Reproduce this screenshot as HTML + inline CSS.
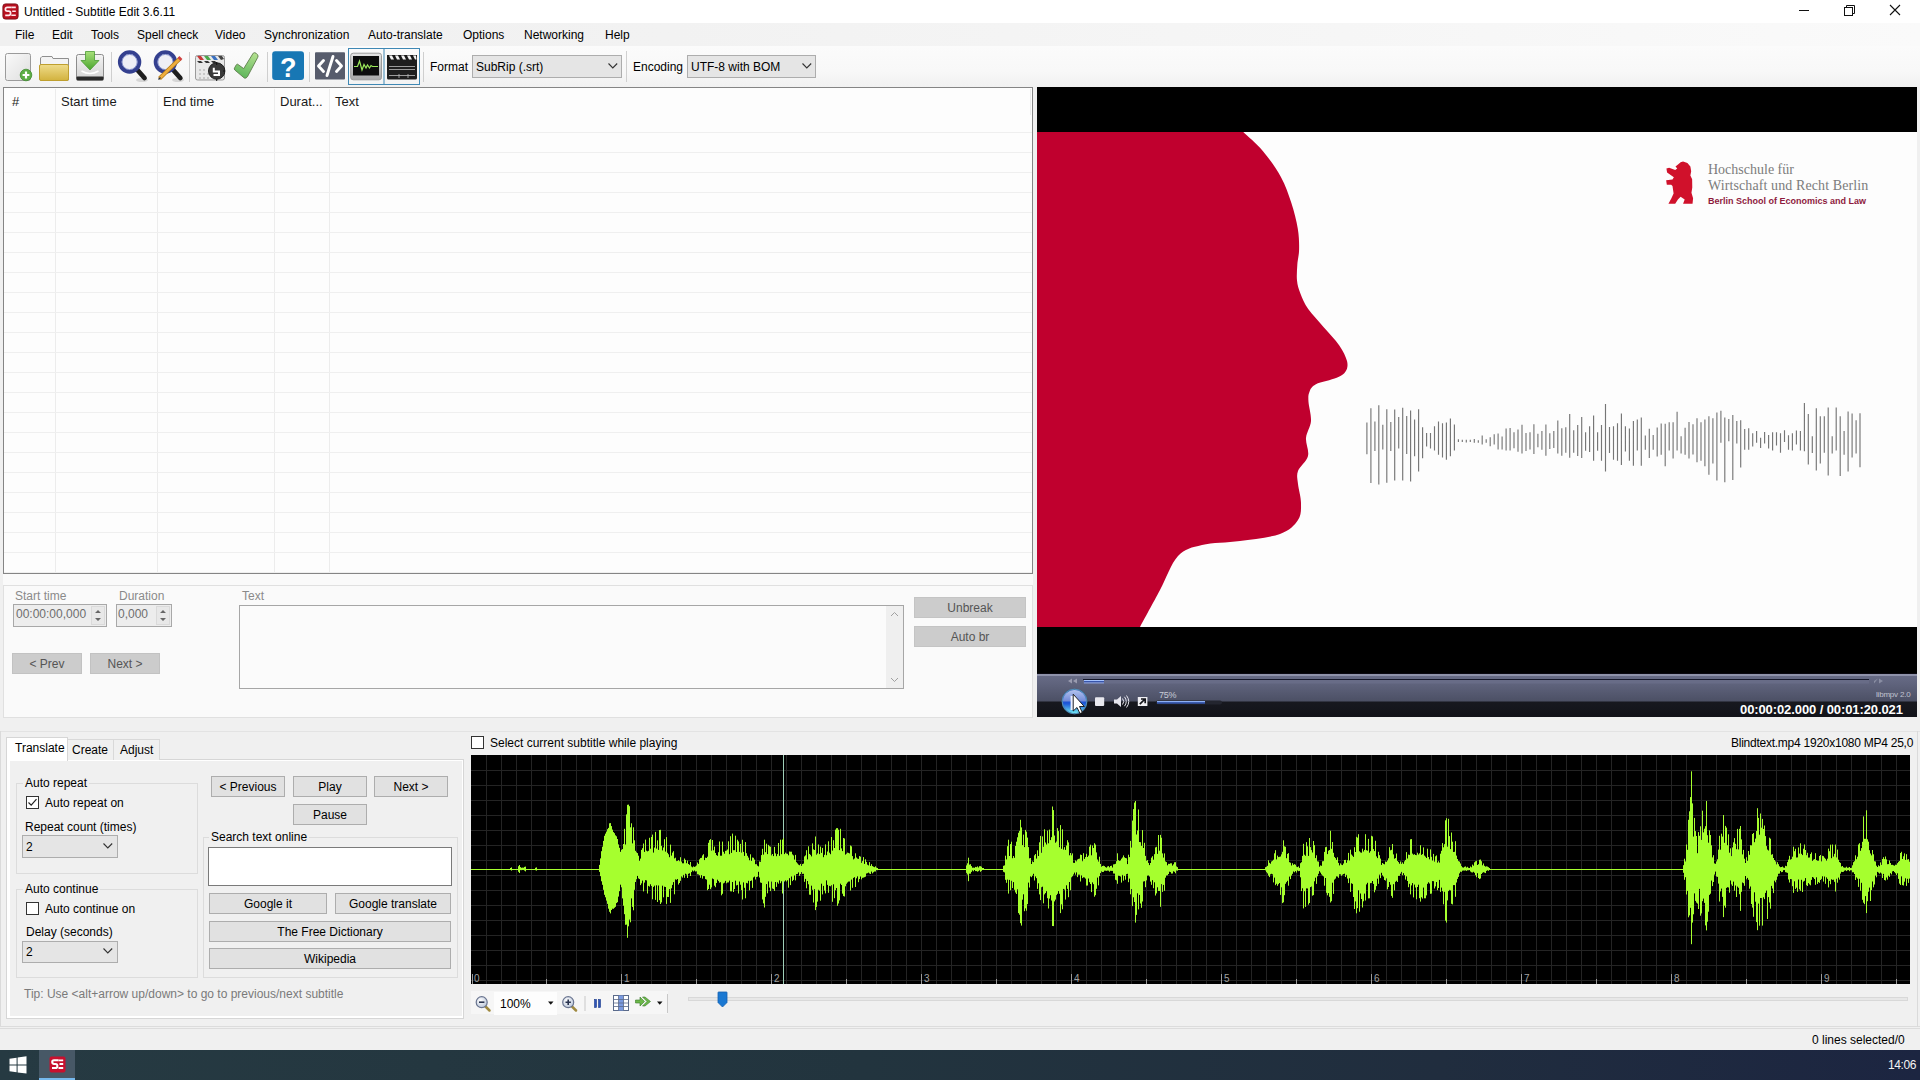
<!DOCTYPE html>
<html><head><meta charset="utf-8"><title>Subtitle Edit</title>
<style>
html,body{margin:0;padding:0;}
body{width:1920px;height:1080px;overflow:hidden;position:relative;background:#f0f0f0;font-family:"Liberation Sans", sans-serif;}
.a{position:absolute;}
.t{position:absolute;white-space:pre;font-family:"Liberation Sans", sans-serif;}
svg{overflow:visible}
</style></head><body>
<div class="a" style="left:0px;top:0px;width:1920px;height:23px;background:#ffffff"></div>
<svg class="a" style="left:1.5px;top:2.5px" width="17" height="17" viewBox="0 0 17 17">
<rect x="0.9" y="0.9" width="15.2" height="15.2" rx="2.6" fill="#b8101f" stroke="#7a0a14" stroke-width="0.9"/>
<path d="M9.3,4.4 H5.2 Q3.4,4.4 3.4,6.3 Q3.4,8.2 5.2,8.2 H6.8 Q8.6,8.2 8.6,10.2 Q8.6,12.3 6.6,12.3 H3.2" stroke="#ffe8ec" stroke-width="1.7" fill="none"/>
<path d="M9.3,4.4 H13.8 M10.2,8.2 H13.8 M9.3,12.3 H13.8" stroke="#ffe8ec" stroke-width="1.6"/>
</svg>
<div class="t" style="left:24px;top:6px;font-size:12px;line-height:12px;color:#000;">Untitled - Subtitle Edit 3.6.11</div>
<div class="a" style="left:1799px;top:10px;width:10px;height:1px;background:#111"></div>
<svg class="a" style="left:1843px;top:4px" width="13" height="13"><path d="M3.5,3.5 V1.5 H11.5 V9.5 H9.5" stroke="#111" fill="none" stroke-width="1"/><rect x="1.5" y="3.5" width="8" height="8" fill="none" stroke="#111"/></svg>
<svg class="a" style="left:1889px;top:4px" width="13" height="13"><path d="M1,1 L11,11 M11,1 L1,11" stroke="#111" stroke-width="1.1"/></svg>
<div class="a" style="left:0px;top:23px;width:1920px;height:23px;background:linear-gradient(90deg,#f0f0f0 0%,#f2f2f2 35%,#f6f6f6 70%,#fafafa 100%)"></div>
<div class="t" style="left:15px;top:29px;font-size:12px;line-height:12px;color:#000;">File</div>
<div class="t" style="left:52px;top:29px;font-size:12px;line-height:12px;color:#000;">Edit</div>
<div class="t" style="left:91px;top:29px;font-size:12px;line-height:12px;color:#000;">Tools</div>
<div class="t" style="left:137px;top:29px;font-size:12px;line-height:12px;color:#000;">Spell check</div>
<div class="t" style="left:215px;top:29px;font-size:12px;line-height:12px;color:#000;">Video</div>
<div class="t" style="left:264px;top:29px;font-size:12px;line-height:12px;color:#000;">Synchronization</div>
<div class="t" style="left:368px;top:29px;font-size:12px;line-height:12px;color:#000;">Auto-translate</div>
<div class="t" style="left:463px;top:29px;font-size:12px;line-height:12px;color:#000;">Options</div>
<div class="t" style="left:524px;top:29px;font-size:12px;line-height:12px;color:#000;">Networking</div>
<div class="t" style="left:605px;top:29px;font-size:12px;line-height:12px;color:#000;">Help</div>
<div class="a" style="left:0px;top:46px;width:1920px;height:41px;background:linear-gradient(180deg,#fbfbfb 0%,#f8f8f8 60%,#f1f1f1 100%)"></div>
<svg class="a" style="left:0;top:44px" width="430" height="44" viewBox="0 44 430 44">
<defs>
<linearGradient id="gpage" x1="0" y1="0" x2="1" y2="1"><stop offset="0" stop-color="#fafafa"/><stop offset="1" stop-color="#dedede"/></linearGradient>
<linearGradient id="gfold" x1="0" y1="0" x2="0" y2="1"><stop offset="0" stop-color="#efdc8a"/><stop offset="1" stop-color="#d2b23e"/></linearGradient>
<linearGradient id="gsave" x1="0" y1="0" x2="0" y2="1"><stop offset="0" stop-color="#f4f4f4"/><stop offset="1" stop-color="#d2d2d2"/></linearGradient>
<linearGradient id="garrow" x1="0" y1="0" x2="0" y2="1"><stop offset="0" stop-color="#a8e07a"/><stop offset="1" stop-color="#4aa52e"/></linearGradient>
<linearGradient id="gcheck" x1="0.7" y1="0" x2="0.4" y2="1"><stop offset="0" stop-color="#b2e08e"/><stop offset="1" stop-color="#5cb55a"/></linearGradient>
<linearGradient id="gmon" x1="0" y1="0" x2="0" y2="1"><stop offset="0" stop-color="#e6e6e6"/><stop offset="1" stop-color="#a8a8a8"/></linearGradient>
</defs>
<!-- new -->
<rect x="5.5" y="53.5" width="25" height="27" rx="2" fill="url(#gpage)" stroke="#9b9b9b"/>
<circle cx="26" cy="75" r="5.8" fill="#5cae45" stroke="#3f8a30" stroke-width="0.8"/>
<path d="M26,71.6 V78.4 M22.6,75 H29.4" stroke="#fff" stroke-width="2.2"/>
<!-- folder -->
<path d="M40.5,58 V80 H68.5 V58.5 H53 L52,56.5 H42 Z" fill="#f3f3f3" stroke="#8f8f8f"/>
<rect x="39.5" y="64.5" width="29" height="16" rx="1.5" fill="url(#gfold)" stroke="#bf9f2e"/>
<!-- save -->
<rect x="76.5" y="54.5" width="27" height="25.5" rx="2" fill="url(#gsave)" stroke="#8c8c8c"/>
<rect x="76.5" y="76.5" width="27" height="4" rx="1" fill="#2a2a2a"/>
<path d="M81.5,71 Q90,76 98.5,71" stroke="#fff" stroke-width="1.5" fill="none"/>
<path d="M85.5,51.5 H94.5 V60.5 H99 L90,70 L81,60.5 H85.5 Z" fill="url(#garrow)" stroke="#4a9a33" stroke-width="0.8"/>
<rect x="111" y="52" width="1" height="30" fill="#cfcfcf"/>
<!-- find -->
<ellipse cx="142" cy="80" rx="6" ry="2" fill="#000" opacity="0.12"/>
<path d="M137,69.5 L144.5,78" stroke="#1e1e1e" stroke-width="4.8" stroke-linecap="round"/>
<circle cx="129.6" cy="62" r="9.8" fill="#eeeff6" stroke="#34408f" stroke-width="3.8"/>
<circle cx="129.6" cy="62" r="7.6" fill="none" stroke="#6a78c0" stroke-width="0.8"/>
<!-- replace -->
<ellipse cx="178" cy="80" rx="6" ry="2" fill="#000" opacity="0.12"/>
<path d="M172.8,69.5 L180.3,78" stroke="#1e1e1e" stroke-width="4.8" stroke-linecap="round"/>
<circle cx="165.4" cy="62" r="9.8" fill="#eeeff6" stroke="#34408f" stroke-width="3.8"/>
<circle cx="165.4" cy="62" r="7.6" fill="none" stroke="#6a78c0" stroke-width="0.8"/>
<path d="M159.5,78.5 L180,58.5" stroke="#b07818" stroke-width="4"/><path d="M159.5,78.5 L180,58.5" stroke="#eeae3e" stroke-width="2.6"/>
<path d="M178.5,57 L181.5,60" stroke="#d04040" stroke-width="2.5"/>
<path d="M158.5,79.5 L160.5,77.5" stroke="#333" stroke-width="1.5"/>
<rect x="189" y="52" width="1" height="30" fill="#cfcfcf"/>
<!-- visual sync clapper -->
<rect x="195.5" y="55.5" width="29" height="24.5" rx="2" fill="#e8e8e8" stroke="#9a9a9a"/>
<path d="M197,56 L201,56 L204,60 L200,60 Z" fill="#c83838"/><path d="M204,56 L208,56 L211,60 L207,60 Z" fill="#4aa84a"/><path d="M211,56 L215,56 L218,60 L214,60 Z" fill="#3a70c0"/><path d="M218,56 L222,56 L224,59 L221,60 Z" fill="#444"/>
<path d="M197,61 L201,61 L203,63 L199,63 Z M204,61 L208,61 L210,63 L206,63 Z M211,61 L215,61 L217,63 L213,63 Z" fill="#333"/>
<path d="M199,70 h2 M203,70 h2 M199,74 h2 M203,74 h2 M207,74 h2 M199,78 h2 M203,78 h2 M207,78 h2" stroke="#c8c8c8" stroke-width="2"/>
<circle cx="216.7" cy="71" r="8.2" fill="#3a3a3a" stroke="#1e1e1e"/>
<path d="M213.8,67.8 V71.5 H219 V75 H213.5" stroke="#fff" stroke-width="2" fill="none"/>
<path d="M216.7,62 V65 M216.7,79 V81 M225,71 h-2" stroke="#111" stroke-width="1"/>
<!-- check -->
<path d="M237.6,64.2 L243.7,68.6 L253.2,53.2 Q254.5,52.2 256,53.2 L257.6,54.8 Q258.4,56 257.8,57.2 L247.4,76.8 Q246,78.8 244.3,78 L234.8,70 Q233.8,69 234.6,67.8 L236.2,65 Q236.8,64 237.6,64.2 Z" fill="url(#gcheck)" stroke="#5f7d4c" stroke-width="0.9" stroke-linejoin="round"/>
<rect x="267" y="52" width="1" height="30" fill="#cfcfcf"/>
<!-- help -->
<rect x="272.2" y="51.3" width="31.8" height="28.8" rx="3" fill="#1877b4"/>
<text x="288.3" y="76.5" text-anchor="middle" font-family="Liberation Sans" font-weight="bold" font-size="27" fill="#fff">?</text>
<rect x="309" y="52" width="1" height="30" fill="#cfcfcf"/>
<!-- source view -->
<rect x="315" y="52.2" width="30" height="27.4" rx="1" fill="#575c6c"/>
<path d="M323.5,60.5 L318.5,66 L323.5,71.5 M336.5,60.5 L341.5,66 L336.5,71.5 M333,56.5 L327,75.5" stroke="#fff" stroke-width="2.9" fill="none" stroke-linecap="round" stroke-linejoin="round"/>
<!-- selected boxes -->
<rect x="348.5" y="48.5" width="71" height="36" fill="none" stroke="#3f88b4"/>
<rect x="383.5" y="48.5" width="1" height="36" fill="#3f88b4"/>
<!-- waveform icon -->
<rect x="350.7" y="53.2" width="30.8" height="26.6" rx="2.5" fill="url(#gmon)" stroke="#9c9c9c"/>
<rect x="353" y="56" width="26" height="19.5" fill="#0d0d0d"/>
<path d="M354,66.5 H357.5 L359.5,61 L362,70 L364,64.5 L366,68 L367.5,65 L369.5,68 L371,65.5 L372.5,66.5 H378" stroke="#9be85a" stroke-width="1.2" fill="none"/>
<!-- video clapper -->
<rect x="387" y="58.5" width="30" height="21" rx="1.5" fill="#1e1e1e"/>
<rect x="387" y="55" width="30" height="5" fill="#181818"/>
<path d="M389,55.5 L392,55.5 L394,59.5 L391,59.5 Z M395,55.5 L398,55.5 L400,59.5 L397,59.5 Z M401,55.5 L404,55.5 L406,59.5 L403,59.5 Z M407,55.5 L410,55.5 L412,59.5 L409,59.5 Z M413,55.5 L416,55.5 L416.5,59.5 L415,59.5 Z" fill="#f2f2f2"/>
<path d="M389,66.5 H415 M389,69.5 H415 M389,75.5 H415 M399,74 V78 M408,74 V78" stroke="#bbb" stroke-width="0.8"/>
<rect x="423" y="52" width="1" height="30" fill="#cfcfcf"/>
</svg>

<div class="t" style="left:430px;top:61px;font-size:12px;line-height:12px;color:#000;">Format</div>
<div class="a" style="left:472px;top:55px;width:150px;height:23px;background:#e5e5e5;border:1px solid #adadad;box-sizing:border-box"></div>
<div class="t" style="left:476px;top:61px;font-size:12px;line-height:12px;color:#000;">SubRip (.srt)</div>
<svg class="a" style="left:608px;top:63px" width="10" height="7"><path d="M0.5,0.5 L4.8,5 L9.2,0.5" stroke="#333" fill="none" stroke-width="1.1"/></svg>
<div class="a" style="left:626px;top:51px;width:1px;height:31px;background:#d0d0d0"></div>
<div class="t" style="left:633px;top:61px;font-size:12px;line-height:12px;color:#000;">Encoding</div>
<div class="a" style="left:687px;top:55px;width:129px;height:23px;background:#e5e5e5;border:1px solid #adadad;box-sizing:border-box"></div>
<div class="t" style="left:691px;top:61px;font-size:12px;line-height:12px;color:#000;">UTF-8 with BOM</div>
<svg class="a" style="left:802px;top:63px" width="10" height="7"><path d="M0.5,0.5 L4.8,5 L9.2,0.5" stroke="#333" fill="none" stroke-width="1.1"/></svg>
<div class="a" style="left:0px;top:87px;width:1920px;height:963px;background:#f0f0f0"></div>
<div class="a" style="left:3px;top:573px;width:1030px;height:12px;background:#fafafa"></div>
<div class="a" style="left:3px;top:87px;width:1030px;height:487px;background:#fdfdfd;border:1px solid #858585;box-sizing:border-box"></div>
<svg class="a" style="left:0;top:0" width="1040" height="580"><rect x="55" y="89" width="1" height="483" fill="#ececec"/><rect x="157" y="89" width="1" height="483" fill="#ececec"/><rect x="274" y="89" width="1" height="483" fill="#ececec"/><rect x="329" y="89" width="1" height="483" fill="#ececec"/><rect x="1030" y="89" width="1" height="26" fill="#ececec"/><rect x="4" y="132" width="1028" height="1" fill="#efefef"/><rect x="4" y="152" width="1028" height="1" fill="#efefef"/><rect x="4" y="172" width="1028" height="1" fill="#efefef"/><rect x="4" y="192" width="1028" height="1" fill="#efefef"/><rect x="4" y="212" width="1028" height="1" fill="#efefef"/><rect x="4" y="232" width="1028" height="1" fill="#efefef"/><rect x="4" y="252" width="1028" height="1" fill="#efefef"/><rect x="4" y="272" width="1028" height="1" fill="#efefef"/><rect x="4" y="292" width="1028" height="1" fill="#efefef"/><rect x="4" y="312" width="1028" height="1" fill="#efefef"/><rect x="4" y="332" width="1028" height="1" fill="#efefef"/><rect x="4" y="352" width="1028" height="1" fill="#efefef"/><rect x="4" y="372" width="1028" height="1" fill="#efefef"/><rect x="4" y="392" width="1028" height="1" fill="#efefef"/><rect x="4" y="412" width="1028" height="1" fill="#efefef"/><rect x="4" y="432" width="1028" height="1" fill="#efefef"/><rect x="4" y="452" width="1028" height="1" fill="#efefef"/><rect x="4" y="472" width="1028" height="1" fill="#efefef"/><rect x="4" y="492" width="1028" height="1" fill="#efefef"/><rect x="4" y="512" width="1028" height="1" fill="#efefef"/><rect x="4" y="532" width="1028" height="1" fill="#efefef"/><rect x="4" y="552" width="1028" height="1" fill="#efefef"/><rect x="4" y="572" width="1028" height="1" fill="#efefef"/></svg>
<div class="t" style="left:12px;top:95px;font-size:13px;line-height:13px;color:#1a1a1a;">#</div>
<div class="t" style="left:61px;top:95px;font-size:13px;line-height:13px;color:#1a1a1a;">Start time</div>
<div class="t" style="left:163px;top:95px;font-size:13px;line-height:13px;color:#1a1a1a;">End time</div>
<div class="t" style="left:280px;top:95px;font-size:13px;line-height:13px;color:#1a1a1a;">Durat...</div>
<div class="t" style="left:335px;top:95px;font-size:13px;line-height:13px;color:#1a1a1a;">Text</div>
<div class="a" style="left:3px;top:585px;width:1030px;height:133px;background:#fafafa;border:1px solid #e0e0e0;box-sizing:border-box"></div>
<div class="t" style="left:15px;top:590px;font-size:12px;line-height:12px;color:#8a8a8a;">Start time</div>
<div class="t" style="left:119px;top:590px;font-size:12px;line-height:12px;color:#8a8a8a;">Duration</div>
<div class="t" style="left:242px;top:590px;font-size:12px;line-height:12px;color:#8a8a8a;">Text</div>
<div class="a" style="left:13px;top:604px;width:94px;height:23px;background:#ededed;border:1px solid #a8a8a8;box-sizing:border-box"></div>
<div class="t" style="left:16px;top:608px;font-size:12px;line-height:12px;color:#6d6d6d;">00:00:00,000</div>
<div class="a" style="left:91px;top:606px;width:14px;height:19px;background:#e8e8e8;border:1px solid #dadada;box-sizing:border-box"></div>
<svg class="a" style="left:91px;top:606px" width="14" height="19"><path d="M4,7 L7,4 L10,7 Z M4,12 L7,15 L10,12 Z" fill="#666"/></svg>
<div class="a" style="left:116px;top:604px;width:56px;height:23px;background:#ededed;border:1px solid #a8a8a8;box-sizing:border-box"></div>
<div class="t" style="left:118px;top:608px;font-size:12px;line-height:12px;color:#6d6d6d;">0,000</div>
<div class="a" style="left:156px;top:606px;width:14px;height:19px;background:#e8e8e8;border:1px solid #dadada;box-sizing:border-box"></div>
<svg class="a" style="left:156px;top:606px" width="14" height="19"><path d="M4,7 L7,4 L10,7 Z M4,12 L7,15 L10,12 Z" fill="#666"/></svg>
<div class="a" style="left:12px;top:653px;width:70px;height:21px;background:#cccccc;border:1px solid #c2c2c2;box-sizing:border-box"></div>
<div class="t" style="left:12px;width:70px;text-align:center;top:658px;font-size:12px;line-height:12px;color:#555;">&lt; Prev</div>
<div class="a" style="left:90px;top:653px;width:70px;height:21px;background:#cccccc;border:1px solid #c2c2c2;box-sizing:border-box"></div>
<div class="t" style="left:90px;width:70px;text-align:center;top:658px;font-size:12px;line-height:12px;color:#555;">Next &gt;</div>
<div class="a" style="left:239px;top:605px;width:665px;height:84px;background:#fbfbfb;border:1px solid #a6a6a6;box-sizing:border-box"></div>
<div class="a" style="left:886px;top:606px;width:17px;height:82px;background:#efefef"></div>
<svg class="a" style="left:886px;top:606px" width="17" height="82"><path d="M5,10 L8.5,6.5 L12,10 M5,72 L8.5,75.5 L12,72" stroke="#a0a0a0" fill="none" stroke-width="1"/></svg>
<div class="a" style="left:914px;top:597px;width:112px;height:21px;background:#cccccc;border:1px solid #c4c4c4;box-sizing:border-box"></div>
<div class="t" style="left:914px;width:112px;text-align:center;top:602px;font-size:12px;line-height:12px;color:#555;">Unbreak</div>
<div class="a" style="left:914px;top:626px;width:112px;height:21px;background:#cccccc;border:1px solid #c4c4c4;box-sizing:border-box"></div>
<div class="t" style="left:914px;width:112px;text-align:center;top:631px;font-size:12px;line-height:12px;color:#555;">Auto br</div>
<div class="a" style="left:1037px;top:87px;width:880px;height:630px;background:#000"></div>
<div class="a" style="left:1037px;top:132px;width:880px;height:495px;background:#fdfdfd"></div>
<svg class="a" style="left:0;top:0" width="1920" height="720"><path d="M1037,132 L1243.3,132  C1246.5,135.2 1256.5,143.4 1262.8,150.9 C1269.1,158.4 1276.2,168.2 1280.9,176.9 C1285.7,185.6 1288.5,194.2 1291.3,202.8 C1294.1,211.4 1296.5,220.9 1297.8,228.7 C1299.1,236.5 1299.2,243.3 1299.1,249.4 C1299.0,255.5 1297.6,259.8 1297.3,265.0 C1297.0,270.2 1296.5,275.9 1297.0,280.6 C1297.5,285.4 1298.5,288.8 1300.4,293.5 C1302.3,298.2 1304.3,303.5 1308.2,309.1 C1312.1,314.7 1318.5,321.1 1323.7,327.2 C1328.9,333.2 1335.4,339.8 1339.3,345.4 C1343.2,351.0 1345.9,356.7 1347.0,361.0 C1348.1,365.3 1347.4,368.5 1345.7,371.3 C1344.0,374.1 1341.7,375.6 1336.7,377.8 C1331.7,380.0 1320.5,381.9 1315.9,384.3 C1311.4,386.7 1310.6,389.1 1309.4,392.0 C1308.2,394.9 1308.2,397.2 1308.5,402.0 C1308.8,406.8 1311.4,415.0 1311.0,421.0 C1310.6,427.0 1306.5,432.2 1306.0,438.0 C1305.5,443.8 1309.3,450.5 1308.0,456.0 C1306.7,461.5 1299.7,466.3 1298.0,471.0 C1296.3,475.7 1297.5,478.7 1298.0,484.0 C1298.5,489.3 1301.0,497.0 1301.0,503.0 C1301.0,509.0 1301.5,514.8 1298.0,520.0 C1294.5,525.2 1289.7,530.5 1280.0,534.0 C1270.3,537.5 1253.0,539.2 1240.0,541.0 C1227.0,542.8 1212.3,542.5 1202.0,545.0 C1191.7,547.5 1185.0,548.5 1178.0,556.0 C1171.0,563.5 1166.3,578.2 1160.0,590.0 C1153.7,601.8 1143.3,620.8 1140.0,627.0 L1037,627 Z" fill="#c0002e"/></svg>
<svg class="a" style="left:0;top:0" width="1920" height="720"><path d="M1366.9,422.5V454.3M1370.9,408.3V483.1M1374.9,421.4V451.0M1378.8,405.2V484.5M1382.8,424.7V449.5M1386.8,409.2V482.7M1390.8,422.0V451.0M1394.7,409.4V480.5M1398.7,417.1V448.6M1402.7,407.7V480.5M1406.7,416.1V453.9M1410.6,410.5V481.4M1414.6,419.6V456.3M1418.6,409.2V471.6M1422.6,427.3V458.3M1426.6,432.9V446.4M1430.5,432.9V448.6M1434.5,426.2V450.6M1438.5,421.4V454.8M1442.5,423.3V457.4M1446.4,422.5V459.7M1450.4,418.5V456.3M1454.4,424.4V450.4M1458.4,439.3V441.9M1462.3,439.7V441.9M1466.3,439.7V442.4M1470.3,439.7V441.9M1474.3,439.0V442.7M1478.3,440.2V442.8M1482.2,435.6V444.6M1486.2,439.3V442.8M1490.2,437.3V446.2M1494.2,434.2V444.4M1498.1,433.4V449.5M1502.1,436.4V449.5M1506.1,428.5V450.4M1510.1,428.0V450.6M1514.0,432.2V448.3M1518.0,429.5V451.7M1522.0,424.7V453.5M1526.0,433.1V451.0M1530.0,432.2V449.5M1533.9,424.2V453.9M1537.9,433.8V447.3M1541.9,431.1V449.7M1545.9,424.5V455.7M1549.8,433.3V448.9M1553.8,431.1V448.0M1557.8,420.4V453.6M1561.8,428.2V455.7M1565.8,427.3V452.8M1569.7,414.0V457.7M1573.7,430.3V452.8M1577.7,424.9V455.9M1581.7,417.1V458.1M1585.6,432.2V450.8M1589.6,426.2V452.1M1593.6,415.4V460.7M1597.6,432.2V450.8M1601.5,424.9V460.7M1605.5,403.9V471.6M1609.5,426.9V453.0M1613.5,426.2V459.7M1617.5,423.2V460.7M1621.4,413.4V465.0M1625.4,426.2V451.5M1629.4,428.4V460.7M1633.4,420.9V465.7M1637.3,419.4V450.6M1641.3,417.6V465.7M1645.3,435.6V449.7M1649.3,428.7V457.9M1653.2,435.1V449.7M1657.2,427.6V456.6M1661.2,423.5V454.8M1665.2,423.8V466.3M1669.2,422.3V450.6M1673.1,422.3V458.6M1677.1,411.8V450.6M1681.1,436.2V453.6M1685.1,427.8V454.8M1689.0,422.0V458.6M1693.0,424.2V454.5M1697.0,418.2V462.3M1701.0,422.3V460.7M1704.9,419.4V466.3M1708.9,416.3V474.7M1712.9,418.2V463.6M1716.9,412.5V480.5M1720.9,410.8V442.8M1724.8,417.6V482.2M1728.8,419.1V441.2M1732.8,414.9V480.0M1736.8,421.1V443.5M1740.7,420.2V467.5M1744.7,429.1V449.7M1748.7,428.2V449.7M1752.7,433.3V446.6M1756.6,431.1V442.8M1760.6,437.7V448.0M1764.6,432.0V443.5M1768.6,435.0V448.6M1772.6,432.2V450.6M1776.5,432.2V445.5M1780.5,433.3V452.8M1784.5,430.3V442.1M1788.5,435.3V449.7M1792.4,433.3V450.4M1796.4,430.4V444.4M1800.4,431.1V450.6M1804.4,403.1V451.2M1808.3,414.0V464.5M1812.3,436.2V453.0M1816.3,408.3V470.5M1820.3,416.3V463.4M1824.3,416.3V452.8M1828.2,407.6V475.4M1832.2,436.2V453.5M1836.2,407.6V450.6M1840.2,416.3V476.0M1844.1,431.1V454.8M1848.1,411.4V471.6M1852.1,413.4V457.4M1856.1,420.2V453.6M1860.0,413.2V467.2" stroke="#767676" stroke-width="1.15" fill="none"/></svg>
<svg class="a" style="left:1640px;top:140px" width="60" height="70" viewBox="0 0 443 517">
<path d="M318,158 L350,170 L372,195 L378,230 L372,262 L385,290 L386,350 L380,390 L392,430 L388,470 L318,470 L330,440 L300,420 L280,440 L260,470 L210,470 L232,430 L248,395 L240,340 L230,330 L198,330 L193,298 L240,292 L250,275 L200,240 L195,210 L215,205 L260,222 L275,210 L262,195 L285,178 L300,165 Z" fill="#d0112b"/>
</svg>
<div class="t" style="left:1708px;top:163px;font-family:'Liberation Serif',serif;font-size:14px;line-height:14px;color:#7c7c7c">Hochschule für</div>
<div class="t" style="left:1708px;top:179px;font-family:'Liberation Serif',serif;font-size:14px;line-height:14px;color:#7c7c7c;letter-spacing:0.1px">Wirtschaft und Recht Berlin</div>
<div class="t" style="left:1708px;top:197px;font-size:9px;line-height:9px;font-weight:bold;color:#8e1a3e">Berlin School of Economics and Law</div>

<div class="a" style="left:1037px;top:673px;width:880px;height:44px;background:linear-gradient(180deg,#0a0810 0px,#0a0810 1px,#8f92aa 1px,#8f92aa 2.5px,#676b86 3px,#5e627b 12px,#4c5065 28px,#17181f 29px,#121319 44px)"></div>
<svg class="a" style="left:1037px;top:673px" width="880" height="44" viewBox="1037 673 880 44">
<defs>
<linearGradient id="gplayT" x1="0" y1="0" x2="0" y2="1"><stop offset="0" stop-color="#b4c4ee"/><stop offset="1" stop-color="#6f88d8"/></linearGradient>
<linearGradient id="gplayB" x1="0" y1="0" x2="0" y2="1"><stop offset="0" stop-color="#1230c0"/><stop offset="0.6" stop-color="#1f5ad8"/><stop offset="1" stop-color="#6ee8f4"/></linearGradient>
</defs>
<rect x="1083" y="679" width="786" height="1" fill="#15172a"/>
<rect x="1083" y="680" width="786" height="3.5" fill="#686c87"/>
<rect x="1084" y="680" width="20" height="1.2" fill="#a4c2ff"/>
<rect x="1084" y="681.2" width="20" height="1.2" fill="#2a4cb0"/>
<rect x="1084" y="682.4" width="20" height="1" fill="#8ea8ea"/>
<path d="M1068,681 L1072,678.5 V683.5 Z M1073,681 L1077,678.5 V683.5 Z" fill="#9a9cb0"/>
<path d="M1874,681 L1878,678.5 L1874,683.5 Z M1879,678.5 L1883,681 L1879,683.5 Z" fill="#8a8ea3"/>
<circle cx="1074.5" cy="701.5" r="12.8" fill="#2a6a98"/>
<circle cx="1074.5" cy="701.5" r="11.6" fill="url(#gplayB)"/>
<path d="M1062.9,701.5 A11.6,11.6 0 0 1 1086.1,701.5 Z" fill="url(#gplayT)"/>
<circle cx="1074.5" cy="701.5" r="12.3" fill="none" stroke="#7ab0d8" stroke-width="0.8" opacity="0.7"/>
<rect x="1070.6" y="696" width="2.8" height="14" fill="#e8eeff"/>
<path d="M1073.2,694.2 L1073.2,711 L1077,707.5 L1080,713.5 L1082.3,712.5 L1079.5,706.5 L1084.3,706.5 Z" fill="#fff" stroke="#111" stroke-width="0.9" stroke-linejoin="round"/>
<rect x="1095" y="697.2" width="9.2" height="8.8" rx="1" fill="#e8e8ee"/>
<path d="M1114,699.5 H1117 L1121,696 V707 L1117,703.5 H1114 Z" fill="#e6e6ee"/>
<path d="M1122.5,698.5 Q1125,701.5 1122.5,704.5 M1124.5,696.8 Q1128,701.5 1124.5,706.2 M1126.5,695.5 Q1131,701.5 1126.5,707.5" stroke="#e6e6ee" stroke-width="1" fill="none"/>
<rect x="1137.8" y="697" width="9.6" height="9" fill="#f0f0f4"/>
<path d="M1139.8,704.2 L1145,699 M1141,699 H1145.2 V703.2" stroke="#15161c" stroke-width="1.7" fill="none"/>
<rect x="1156" y="700.5" width="66" height="4" rx="2" fill="#23252f"/>
<rect x="1157" y="701" width="48" height="1.3" fill="#8eb0f4"/>
<rect x="1157" y="702.3" width="48" height="1.3" fill="#3a64d0"/>
</svg>
<div class="t" style="left:1159px;top:691px;font-size:9px;line-height:9px;color:#c9ccd8;letter-spacing:-0.3px">75%</div>
<div class="t" style="left:1876px;top:691px;font-size:8px;line-height:8px;color:#c0c3d0;letter-spacing:-0.2px">libmpv 2.0</div>
<div class="t" style="left:1740px;top:703px;font-size:13px;line-height:13px;font-weight:bold;color:#fff;letter-spacing:-0.1px">00:00:02.000 / 00:01:20.021</div>

<div class="a" style="left:0px;top:731px;width:1920px;height:1px;background:#e3e3e3"></div>
<!-- outer panel border -->
<div class="a" style="left:0;top:731px;width:1px;height:296px;background:#dadada"></div>
<div class="a" style="left:0;top:1026px;width:1920px;height:1px;background:#dcdcdc"></div>
<div class="a" style="left:1917px;top:731px;width:1px;height:296px;background:#dadada"></div>
<!-- tab page -->
<div class="a" style="left:6px;top:759px;width:458px;height:260px;background:#fff;border:1px solid #d6d6d6;box-sizing:border-box"></div>
<div class="a" style="left:10px;top:761px;width:452px;height:255px;background:#f0f0f0"></div>
<!-- tabs -->
<div class="a" style="left:67px;top:739px;width:47px;height:21px;background:#f0f0f0;border:1px solid #d9d9d9;border-bottom:none;box-sizing:border-box"></div>
<div class="a" style="left:113px;top:739px;width:47px;height:21px;background:#f0f0f0;border:1px solid #d9d9d9;border-bottom:none;box-sizing:border-box"></div>
<div class="a" style="left:6px;top:737px;width:62px;height:24px;background:#fff;border:1px solid #d6d6d6;border-bottom:none;box-sizing:border-box"></div>
<div class="t" style="left:15px;top:742px;font-size:12px;line-height:12px">Translate</div>
<div class="t" style="left:72px;top:744px;font-size:12px;line-height:12px">Create</div>
<div class="t" style="left:120px;top:744px;font-size:12px;line-height:12px">Adjust</div>
<!-- groupbox auto repeat -->
<div class="a" style="left:16px;top:783px;width:182px;height:91px;border:1px solid #dcdcdc;box-sizing:border-box"></div>
<div class="t" style="left:23px;top:777px;font-size:12px;line-height:12px;background:#f0f0f0;padding:0 2px">Auto repeat</div>
<div class="a" style="left:26px;top:796px;width:13px;height:13px;background:#fff;border:1px solid #333;box-sizing:border-box"></div>
<svg class="a" style="left:26px;top:796px" width="13" height="13"><path d="M2.5,6.5 L5.2,9.2 L10.5,3.2" stroke="#222" stroke-width="1.2" fill="none"/></svg>
<div class="t" style="left:45px;top:797px;font-size:12px;line-height:12px">Auto repeat on</div>
<div class="t" style="left:25px;top:821px;font-size:12px;line-height:12px">Repeat count (times)</div>
<div class="a" style="left:22px;top:835px;width:96px;height:23px;background:#e5e5e5;border:1px solid #adadad;box-sizing:border-box"></div>
<div class="t" style="left:26px;top:841px;font-size:12px;line-height:12px">2</div>
<svg class="a" style="left:103px;top:843px" width="10" height="7"><path d="M0.5,0.5 L4.8,5 L9.2,0.5" stroke="#333" fill="none" stroke-width="1.1"/></svg>
<!-- groupbox auto continue -->
<div class="a" style="left:16px;top:889px;width:182px;height:89px;border:1px solid #dcdcdc;box-sizing:border-box"></div>
<div class="t" style="left:23px;top:883px;font-size:12px;line-height:12px;background:#f0f0f0;padding:0 2px">Auto continue</div>
<div class="a" style="left:26px;top:902px;width:13px;height:13px;background:#fff;border:1px solid #333;box-sizing:border-box"></div>
<div class="t" style="left:45px;top:903px;font-size:12px;line-height:12px">Auto continue on</div>
<div class="t" style="left:26px;top:926px;font-size:12px;line-height:12px">Delay (seconds)</div>
<div class="a" style="left:22px;top:941px;width:96px;height:22px;background:#e5e5e5;border:1px solid #adadad;box-sizing:border-box"></div>
<div class="t" style="left:26px;top:946px;font-size:12px;line-height:12px">2</div>
<svg class="a" style="left:103px;top:948px" width="10" height="7"><path d="M0.5,0.5 L4.8,5 L9.2,0.5" stroke="#333" fill="none" stroke-width="1.1"/></svg>
<!-- buttons -->
<div class="a" style="left:211px;top:776px;width:74px;height:21px;background:#e1e1e1;border:1px solid #adadad;box-sizing:border-box"></div>
<div class="t" style="left:211px;width:74px;text-align:center;top:781px;font-size:12px;line-height:12px">&lt; Previous</div>
<div class="a" style="left:293px;top:776px;width:74px;height:21px;background:#e1e1e1;border:1px solid #adadad;box-sizing:border-box"></div>
<div class="t" style="left:293px;width:74px;text-align:center;top:781px;font-size:12px;line-height:12px">Play</div>
<div class="a" style="left:374px;top:776px;width:74px;height:21px;background:#e1e1e1;border:1px solid #adadad;box-sizing:border-box"></div>
<div class="t" style="left:374px;width:74px;text-align:center;top:781px;font-size:12px;line-height:12px">Next &gt;</div>
<div class="a" style="left:293px;top:804px;width:74px;height:21px;background:#e1e1e1;border:1px solid #adadad;box-sizing:border-box"></div>
<div class="t" style="left:293px;width:74px;text-align:center;top:809px;font-size:12px;line-height:12px">Pause</div>
<!-- groupbox search -->
<div class="a" style="left:203px;top:837px;width:255px;height:141px;border:1px solid #dcdcdc;box-sizing:border-box"></div>
<div class="t" style="left:209px;top:831px;font-size:12px;line-height:12px;background:#f0f0f0;padding:0 2px">Search text online</div>
<div class="a" style="left:208px;top:847px;width:244px;height:39px;background:#fff;border:1px solid #7a7a7a;box-sizing:border-box"></div>
<div class="a" style="left:209px;top:893px;width:118px;height:21px;background:#e1e1e1;border:1px solid #adadad;box-sizing:border-box"></div>
<div class="t" style="left:209px;width:118px;text-align:center;top:898px;font-size:12px;line-height:12px">Google it</div>
<div class="a" style="left:335px;top:893px;width:116px;height:21px;background:#e1e1e1;border:1px solid #adadad;box-sizing:border-box"></div>
<div class="t" style="left:335px;width:116px;text-align:center;top:898px;font-size:12px;line-height:12px">Google translate</div>
<div class="a" style="left:209px;top:921px;width:242px;height:21px;background:#e1e1e1;border:1px solid #adadad;box-sizing:border-box"></div>
<div class="t" style="left:209px;width:242px;text-align:center;top:926px;font-size:12px;line-height:12px">The Free Dictionary</div>
<div class="a" style="left:209px;top:948px;width:242px;height:21px;background:#e1e1e1;border:1px solid #adadad;box-sizing:border-box"></div>
<div class="t" style="left:209px;width:242px;text-align:center;top:953px;font-size:12px;line-height:12px">Wikipedia</div>
<div class="t" style="left:24px;top:988px;font-size:12px;line-height:12px;color:#7a7a7a">Tip: Use &lt;alt+arrow up/down&gt; to go to previous/next subtitle</div>
<!-- waveform header -->
<div class="a" style="left:471px;top:736px;width:13px;height:13px;background:#fff;border:1px solid #333;box-sizing:border-box"></div>
<div class="t" style="left:490px;top:737px;font-size:12px;line-height:12px">Select current subtitle while playing</div>
<div class="t" style="left:1731px;top:737px;font-size:12px;line-height:12px;letter-spacing:-0.25px">Blindtext.mp4 1920x1080 MP4 25,0</div>
<!-- waveform toolstrip -->
<div class="a" style="left:471px;top:991px;width:197px;height:23px;background:#f6f6f6"></div>
<div class="a" style="left:494px;top:992px;width:63px;height:23px;background:#fdfdfd"></div>
<svg class="a" style="left:466px;top:984px" width="210" height="35" viewBox="466 984 210 35">
<defs><radialGradient id="gmag" cx="0.4" cy="0.35" r="0.7"><stop offset="0" stop-color="#ffffff"/><stop offset="1" stop-color="#b8c4d8"/></radialGradient></defs>
<path d="M485,1006 L489.5,1010.5" stroke="#a08a40" stroke-width="2.5" stroke-linecap="round"/>
<circle cx="481.7" cy="1002.2" r="5.5" fill="url(#gmag)" stroke="#6a7590" stroke-width="1.2"/>
<path d="M479,1002.2 H484.4" stroke="#2a3550" stroke-width="1.6"/>
<path d="M548,1001.5 H553.5 L550.75,1004.8 Z" fill="#111"/>
<path d="M571.5,1006 L576,1010.5" stroke="#a08a40" stroke-width="2.5" stroke-linecap="round"/>
<circle cx="568.2" cy="1002.2" r="5.5" fill="url(#gmag)" stroke="#6a7590" stroke-width="1.2"/>
<path d="M565.5,1002.2 H570.9 M568.2,999.5 V1004.9" stroke="#2a3550" stroke-width="1.6"/>
<rect x="584.5" y="996" width="1" height="15" fill="#c8c8c8"/>
<rect x="594.5" y="999.5" width="2" height="8" fill="#2e55b8" stroke="#1a3a8a" stroke-width="0.6"/>
<rect x="598.5" y="999.5" width="2" height="8" fill="#2e55b8" stroke="#1a3a8a" stroke-width="0.6"/>
<rect x="613.5" y="995.5" width="15" height="15" fill="#fff" stroke="#5a6a8a"/>
<rect x="618.5" y="995.5" width="5" height="15" fill="#7a9ae0"/>
<path d="M613.5,999.5 H628.5 M613.5,1003 H628.5 M613.5,1006.5 H628.5 M618.5,995.5 V1010.5 M623.5,995.5 V1010.5" stroke="#5a6a8a" stroke-width="0.8"/>
<path d="M635.5,1000 H640 V997 L644.5,1001.5 L640,1006 V1003 H635.5 Z" fill="#6cb84a" stroke="#3a7a2a" stroke-width="0.6"/>
<path d="M642.5,997 L647,1001.5 L642.5,1006 L645,1006 L650.5,1001.5 L645,997 Z" fill="#6cb84a" stroke="#3a7a2a" stroke-width="0.6"/>
<path d="M657,1001.5 H662.5 L659.75,1004.8 Z" fill="#111"/>
<rect x="667" y="994" width="1" height="19" fill="#c8c8c8"/>
</svg>
<div class="t" style="left:500px;top:998px;font-size:12px;line-height:12px">100%</div>
<!-- slider -->
<div class="a" style="left:688px;top:997px;width:1220px;height:4px;background:#e7e7e7;border:1px solid #d8d8d8;box-sizing:border-box"></div>
<svg class="a" style="left:717px;top:991px" width="11" height="17"><path d="M1,1.5 Q1,1 1.5,1 H9.5 Q10,1 10,1.5 V11.5 L5.5,16 L1,11.5 Z" fill="#1a78d2" stroke="#1560b0" stroke-width="0.8"/></svg>

<svg class="a" style="left:0;top:0" width="1920" height="1000"><rect x="471" y="755" width="1439" height="229" fill="#000"/><path d="M486.5,755V984M501.5,755V984M516.5,755V984M531.5,755V984M546.5,755V984M561.5,755V984M576.5,755V984M591.5,755V984M606.5,755V984M621.5,755V984M636.5,755V984M651.5,755V984M666.5,755V984M681.5,755V984M696.5,755V984M711.5,755V984M726.5,755V984M741.5,755V984M756.5,755V984M771.5,755V984M786.5,755V984M801.5,755V984M816.5,755V984M831.5,755V984M846.5,755V984M861.5,755V984M876.5,755V984M891.5,755V984M906.5,755V984M921.5,755V984M936.5,755V984M951.5,755V984M966.5,755V984M981.5,755V984M996.5,755V984M1011.5,755V984M1026.5,755V984M1041.5,755V984M1056.5,755V984M1071.5,755V984M1086.5,755V984M1101.5,755V984M1116.5,755V984M1131.5,755V984M1146.5,755V984M1161.5,755V984M1176.5,755V984M1191.5,755V984M1206.5,755V984M1221.5,755V984M1236.5,755V984M1251.5,755V984M1266.5,755V984M1281.5,755V984M1296.5,755V984M1311.5,755V984M1326.5,755V984M1341.5,755V984M1356.5,755V984M1371.5,755V984M1386.5,755V984M1401.5,755V984M1416.5,755V984M1431.5,755V984M1446.5,755V984M1461.5,755V984M1476.5,755V984M1491.5,755V984M1506.5,755V984M1521.5,755V984M1536.5,755V984M1551.5,755V984M1566.5,755V984M1581.5,755V984M1596.5,755V984M1611.5,755V984M1626.5,755V984M1641.5,755V984M1656.5,755V984M1671.5,755V984M1686.5,755V984M1701.5,755V984M1716.5,755V984M1731.5,755V984M1746.5,755V984M1761.5,755V984M1776.5,755V984M1791.5,755V984M1806.5,755V984M1821.5,755V984M1836.5,755V984M1851.5,755V984M1866.5,755V984M1881.5,755V984M1896.5,755V984M471,770.5H1910M471,785.5H1910M471,800.5H1910M471,815.5H1910M471,830.5H1910M471,845.5H1910M471,860.5H1910M471,875.5H1910M471,890.5H1910M471,905.5H1910M471,920.5H1910M471,935.5H1910M471,950.5H1910M471,965.5H1910M471,980.5H1910" stroke="#242424" stroke-width="1"/><path d="M471,869.5H1910" stroke="#a6ff2e" stroke-width="1"/><path d="M783.5,755V984" stroke="#9fcfb8" stroke-width="1"/><path d="M510.5,868.0V870.0M511.5,867.4V870.6M518.5,866.2V871.8M519.5,865.0V873.0M520.5,867.1V870.1M521.5,867.8V870.2M522.5,867.6V870.0M523.5,867.7V870.0M524.5,866.9V870.6M525.5,866.6V871.4M535.5,867.8V870.2M536.5,867.4V870.6M599.5,864.9V871.9M600.5,858.4V876.2M601.5,851.2V881.3M602.5,846.7V884.8M603.5,840.9V889.8M604.5,835.8V894.8M605.5,833.6V897.3M606.5,831.7V900.6M607.5,829.2V903.9M608.5,827.9V908.7M609.5,823.3V911.8M610.5,823.1V913.4M611.5,826.1V910.0M612.5,829.6V908.7M613.5,832.1V908.8M614.5,833.2V907.8M615.5,835.3V906.8M616.5,836.3V903.1M617.5,839.0V902.2M618.5,844.4V896.6M619.5,847.8V891.2M620.5,851.8V884.7M621.5,849.8V887.3M622.5,849.1V898.4M623.5,844.0V905.7M624.5,828.8V914.2M625.5,844.5V924.8M626.5,814.4V924.6M627.5,804.8V937.8M628.5,804.6V926.3M629.5,806.2V919.6M630.5,827.3V922.3M631.5,823.3V898.4M632.5,843.4V906.9M633.5,827.3V910.3M634.5,840.3V889.8M635.5,850.8V882.0M636.5,852.3V879.2M637.5,853.1V875.9M638.5,855.7V878.4M639.5,860.9V879.1M640.5,858.6V885.1M641.5,849.9V883.4M642.5,848.2V880.6M643.5,843.5V891.4M644.5,851.9V882.6M645.5,839.6V880.1M646.5,850.7V880.4M647.5,851.4V893.5M648.5,850.8V885.9M649.5,837.8V886.6M650.5,848.7V884.3M651.5,837.0V886.0M652.5,834.6V899.3M653.5,852.6V886.9M654.5,847.6V885.7M655.5,831.9V899.9M656.5,848.6V885.3M657.5,840.3V902.0M658.5,849.9V885.5M659.5,830.0V900.2M660.5,829.8V904.0M661.5,845.9V902.4M662.5,850.4V885.7M663.5,847.5V897.3M664.5,839.2V886.7M665.5,851.6V887.0M666.5,837.1V903.9M667.5,852.8V896.9M668.5,854.3V897.0M669.5,857.2V889.2M670.5,844.6V902.9M671.5,855.6V888.3M672.5,852.6V884.9M673.5,851.2V882.1M674.5,858.4V894.3M675.5,857.7V879.4M676.5,861.1V879.8M677.5,861.0V879.0M678.5,860.1V884.5M679.5,861.2V883.0M680.5,857.2V880.8M681.5,861.6V876.4M682.5,863.3V877.6M683.5,863.3V874.9M684.5,858.5V877.8M685.5,859.9V873.7M686.5,863.2V874.5M687.5,860.6V878.0M688.5,864.0V873.8M689.5,864.8V873.3M690.5,862.0V876.0M691.5,866.5V872.1M692.5,867.3V870.5M693.5,866.4V871.4M694.5,866.9V870.5M695.5,866.4V871.5M696.5,865.5V871.3M697.5,862.5V874.3M698.5,863.9V874.5M699.5,859.4V875.2M700.5,858.1V877.8M701.5,857.8V875.0M702.5,855.4V878.6M703.5,854.2V876.1M704.5,860.1V876.2M705.5,857.7V879.1M706.5,858.0V879.6M707.5,856.7V890.2M708.5,842.8V889.0M709.5,840.1V884.7M710.5,839.1V889.2M711.5,850.7V887.4M712.5,840.0V878.5M713.5,850.3V879.2M714.5,846.6V885.7M715.5,853.0V887.2M716.5,855.1V883.0M717.5,855.8V879.7M718.5,852.2V881.1M719.5,841.5V882.7M720.5,855.7V882.2M721.5,855.7V895.3M722.5,841.6V893.8M723.5,851.8V883.4M724.5,853.7V882.7M725.5,850.9V880.9M726.5,850.6V883.3M727.5,849.5V882.5M728.5,841.3V882.4M729.5,854.2V880.6M730.5,836.2V891.3M731.5,852.9V891.4M732.5,833.6V882.0M733.5,850.2V892.0M734.5,850.2V889.0M735.5,835.7V880.7M736.5,852.0V885.4M737.5,839.7V884.9M738.5,841.4V893.5M739.5,851.9V881.5M740.5,843.9V884.7M741.5,852.6V890.2M742.5,839.8V899.5M743.5,851.9V882.4M744.5,855.9V887.8M745.5,842.1V898.3M746.5,853.2V882.9M747.5,855.8V883.4M748.5,857.6V880.8M749.5,860.3V890.3M750.5,854.3V881.0M751.5,861.0V880.5M752.5,857.5V887.9M753.5,857.8V877.4M754.5,859.6V876.6M755.5,864.2V879.5M756.5,864.2V877.0M757.5,865.7V876.7M758.5,866.4V871.8M759.5,861.5V877.5M760.5,861.8V882.5M761.5,855.1V882.9M762.5,848.8V899.5M763.5,854.6V903.4M764.5,839.7V907.5M765.5,852.2V896.8M766.5,843.7V884.1M767.5,854.1V893.3M768.5,844.9V881.4M769.5,846.2V887.6M770.5,846.7V891.1M771.5,855.4V881.6M772.5,854.0V888.5M773.5,856.1V889.1M774.5,846.9V890.9M775.5,853.4V882.0M776.5,856.2V886.9M777.5,854.1V882.3M778.5,843.0V883.7M779.5,855.8V880.4M780.5,839.7V883.2M781.5,854.2V881.3M782.5,839.6V893.5M783.5,838.2V881.4M784.5,854.1V881.5M785.5,852.6V880.4M786.5,853.6V881.5M787.5,853.8V880.3M788.5,855.3V887.7M789.5,851.5V878.2M790.5,851.7V885.1M791.5,851.7V876.5M792.5,854.4V881.1M793.5,855.4V879.9M794.5,859.6V875.4M795.5,854.9V880.4M796.5,862.2V874.1M797.5,863.4V873.9M798.5,864.6V872.4M799.5,865.2V875.8M800.5,863.9V874.1M801.5,865.9V872.1M802.5,864.1V873.9M803.5,863.6V873.8M804.5,856.4V881.8M805.5,855.4V878.9M806.5,850.2V888.3M807.5,859.4V881.0M808.5,846.3V884.3M809.5,853.9V894.7M810.5,854.8V894.8M811.5,856.4V885.7M812.5,843.4V889.8M813.5,849.4V902.5M814.5,850.0V889.2M815.5,836.5V910.1M816.5,854.7V906.9M817.5,853.4V901.6M818.5,844.5V889.8M819.5,854.1V890.7M820.5,846.6V900.7M821.5,852.9V883.7M822.5,847.9V894.4M823.5,857.2V885.9M824.5,854.8V890.6M825.5,844.4V893.4M826.5,855.2V880.4M827.5,851.5V884.9M828.5,841.3V892.8M829.5,852.7V885.9M830.5,854.2V886.3M831.5,837.0V885.2M832.5,850.6V901.8M833.5,840.2V884.3M834.5,848.0V898.2M835.5,829.6V890.2M836.5,828.2V888.0M837.5,828.1V905.8M838.5,829.7V903.5M839.5,850.1V900.4M840.5,828.8V883.7M841.5,848.4V885.0M842.5,851.1V893.7M843.5,838.0V896.1M844.5,838.5V896.5M845.5,854.6V886.3M846.5,853.7V883.8M847.5,852.6V882.5M848.5,852.9V881.6M849.5,853.4V881.5M850.5,845.5V890.5M851.5,846.3V879.6M852.5,856.1V887.8M853.5,859.4V877.9M854.5,858.5V877.2M855.5,853.3V887.0M856.5,857.5V878.3M857.5,858.6V876.4M858.5,858.9V882.2M859.5,856.1V879.1M860.5,856.6V876.5M861.5,862.9V879.4M862.5,861.1V877.8M863.5,857.1V877.6M864.5,863.9V877.2M865.5,859.3V876.7M866.5,861.9V873.5M867.5,864.7V873.2M868.5,865.4V872.6M869.5,862.1V873.5M870.5,865.9V874.0M871.5,864.2V871.6M872.5,866.1V873.4M873.5,866.7V872.3M874.5,867.2V871.5M875.5,866.3V871.5M876.5,867.6V870.0M877.5,868.0V870.2M966.5,865.4V872.9M967.5,863.3V874.5M968.5,857.7V881.2M969.5,864.6V873.7M970.5,864.2V873.7M971.5,866.1V871.9M972.5,867.7V870.4M973.5,867.6V871.3M974.5,867.8V870.0M975.5,866.9V871.1M976.5,867.2V871.1M977.5,866.4V871.7M978.5,867.5V871.2M979.5,866.2V870.3M980.5,866.2V871.8M981.5,866.7V870.9M982.5,868.0V870.0M983.5,868.0V870.0M1003.5,865.8V871.8M1004.5,865.4V872.4M1005.5,855.7V879.8M1006.5,859.4V882.8M1007.5,846.2V879.6M1008.5,839.7V893.6M1009.5,856.0V879.9M1010.5,844.1V890.2M1011.5,841.7V880.8M1012.5,858.2V888.0M1013.5,856.0V882.1M1014.5,857.8V889.8M1015.5,846.0V892.5M1016.5,841.7V894.0M1017.5,837.3V889.4M1018.5,832.8V913.1M1019.5,830.8V914.7M1020.5,819.8V923.2M1021.5,827.4V925.6M1022.5,845.1V899.7M1023.5,834.6V894.3M1024.5,847.1V911.2M1025.5,829.9V908.4M1026.5,831.8V910.7M1027.5,837.6V904.1M1028.5,847.1V882.6M1029.5,858.3V887.5M1030.5,858.0V876.4M1031.5,864.0V877.2M1032.5,861.4V875.6M1033.5,862.1V873.8M1034.5,855.3V880.5M1035.5,854.0V876.4M1036.5,858.6V878.2M1037.5,850.3V888.9M1038.5,856.0V883.3M1039.5,842.3V894.4M1040.5,835.9V900.1M1041.5,852.8V887.2M1042.5,836.4V886.7M1043.5,846.7V903.3M1044.5,829.3V894.4M1045.5,842.5V893.1M1046.5,844.5V891.2M1047.5,830.6V898.2M1048.5,843.3V908.5M1049.5,829.6V898.6M1050.5,840.1V895.2M1051.5,837.2V900.5M1052.5,806.5V926.0M1053.5,810.1V926.1M1054.5,835.5V901.4M1055.5,842.7V899.6M1056.5,841.5V895.1M1057.5,828.1V893.8M1058.5,831.1V891.1M1059.5,847.2V893.8M1060.5,825.1V913.1M1061.5,848.8V904.4M1062.5,829.3V909.3M1063.5,849.6V888.9M1064.5,847.2V889.6M1065.5,849.9V899.6M1066.5,845.5V885.3M1067.5,840.2V888.9M1068.5,842.4V897.2M1069.5,855.3V882.0M1070.5,853.0V890.2M1071.5,855.3V877.3M1072.5,853.4V876.3M1073.5,862.8V874.5M1074.5,862.9V872.6M1075.5,860.4V874.7M1076.5,861.3V872.4M1077.5,859.5V877.1M1078.5,858.9V874.7M1079.5,858.6V874.7M1080.5,854.6V881.5M1081.5,855.0V875.3M1082.5,861.2V878.1M1083.5,853.2V877.3M1084.5,858.9V877.5M1085.5,857.1V878.6M1086.5,853.8V885.6M1087.5,857.0V885.5M1088.5,855.6V878.5M1089.5,846.7V882.2M1090.5,844.7V884.0M1091.5,855.3V892.1M1092.5,845.5V882.4M1093.5,848.0V884.2M1094.5,843.2V896.7M1095.5,844.6V895.2M1096.5,852.4V888.8M1097.5,859.5V877.6M1098.5,861.5V885.4M1099.5,856.7V876.2M1100.5,863.9V873.1M1101.5,866.7V871.4M1102.5,866.0V872.0M1103.5,865.7V871.9M1104.5,866.1V870.7M1105.5,867.1V870.7M1106.5,867.6V870.9M1107.5,866.5V870.6M1108.5,866.1V870.7M1109.5,867.3V871.7M1110.5,866.0V870.8M1111.5,865.7V870.9M1112.5,867.5V870.9M1113.5,864.4V873.5M1114.5,864.2V873.6M1115.5,863.8V879.8M1116.5,861.2V880.4M1117.5,853.3V883.8M1118.5,860.2V875.7M1119.5,861.0V875.9M1120.5,860.5V876.5M1121.5,858.7V882.6M1122.5,857.5V874.9M1123.5,855.4V880.7M1124.5,857.3V875.9M1125.5,858.0V879.7M1126.5,858.3V874.2M1127.5,864.1V873.8M1128.5,854.7V882.2M1129.5,857.1V878.6M1130.5,840.9V894.3M1131.5,847.6V889.0M1132.5,820.6V906.1M1133.5,809.1V897.3M1134.5,802.6V902.0M1135.5,801.0V922.6M1136.5,834.5V914.9M1137.5,830.5V893.3M1138.5,809.5V909.4M1139.5,842.0V894.9M1140.5,842.2V903.5M1141.5,845.9V907.8M1142.5,830.1V901.5M1143.5,848.0V881.5M1144.5,842.8V881.2M1145.5,855.9V887.2M1146.5,860.7V880.4M1147.5,860.1V875.6M1148.5,862.9V875.4M1149.5,865.1V876.5M1150.5,863.0V881.6M1151.5,857.6V884.8M1152.5,856.2V880.2M1153.5,859.7V888.2M1154.5,854.2V882.3M1155.5,847.4V895.5M1156.5,846.8V893.4M1157.5,853.9V887.3M1158.5,835.0V891.0M1159.5,850.7V891.0M1160.5,834.9V906.8M1161.5,837.7V884.1M1162.5,853.4V891.9M1163.5,857.6V884.9M1164.5,853.4V890.8M1165.5,861.4V877.7M1166.5,862.1V875.5M1167.5,865.3V875.3M1168.5,863.8V874.0M1169.5,863.9V871.7M1170.5,863.3V872.1M1171.5,863.3V873.6M1172.5,865.6V873.5M1173.5,864.3V871.3M1174.5,862.3V871.8M1175.5,862.2V873.3M1176.5,866.4V870.5M1177.5,867.2V870.7M1265.5,867.2V870.4M1266.5,866.7V872.2M1267.5,865.8V873.4M1268.5,860.3V875.6M1269.5,862.8V877.1M1270.5,863.7V874.3M1271.5,861.5V873.8M1272.5,860.8V874.3M1273.5,859.7V882.4M1274.5,853.3V877.6M1275.5,850.2V885.2M1276.5,859.4V883.8M1277.5,855.6V885.8M1278.5,857.1V884.2M1279.5,856.8V883.0M1280.5,856.5V894.9M1281.5,854.4V887.3M1282.5,851.8V903.1M1283.5,840.3V902.3M1284.5,846.3V895.2M1285.5,846.8V883.8M1286.5,858.2V882.2M1287.5,853.9V880.8M1288.5,853.1V885.7M1289.5,862.2V876.6M1290.5,862.7V879.1M1291.5,865.5V875.6M1292.5,863.2V873.8M1293.5,864.8V871.5M1294.5,864.1V872.3M1295.5,864.7V871.1M1296.5,866.6V872.6M1297.5,867.1V870.5M1298.5,866.4V871.2M1299.5,867.9V870.9M1300.5,863.2V877.3M1301.5,862.2V891.1M1302.5,855.9V888.3M1303.5,843.8V908.4M1304.5,854.7V891.2M1305.5,855.8V906.9M1306.5,842.1V888.4M1307.5,846.3V888.5M1308.5,855.9V904.6M1309.5,838.0V903.0M1310.5,847.1V887.1M1311.5,850.1V886.5M1312.5,852.5V895.7M1313.5,841.0V895.1M1314.5,845.1V881.3M1315.5,858.1V877.7M1316.5,855.3V883.9M1317.5,861.3V876.3M1318.5,861.6V873.8M1319.5,866.7V871.2M1320.5,865.4V872.6M1321.5,865.8V874.4M1322.5,861.3V875.5M1323.5,861.1V876.4M1324.5,851.9V885.7M1325.5,847.2V878.0M1326.5,846.9V892.8M1327.5,854.1V895.3M1328.5,850.7V893.1M1329.5,850.0V896.8M1330.5,830.8V902.5M1331.5,848.8V901.2M1332.5,842.0V882.7M1333.5,852.8V893.9M1334.5,856.9V879.6M1335.5,858.1V878.6M1336.5,859.9V876.4M1337.5,857.3V876.6M1338.5,862.9V877.8M1339.5,865.4V874.3M1340.5,863.4V874.4M1341.5,864.7V875.8M1342.5,865.1V874.7M1343.5,863.5V874.1M1344.5,860.0V873.7M1345.5,859.9V877.0M1346.5,862.8V874.9M1347.5,860.3V878.6M1348.5,852.9V883.1M1349.5,860.5V878.3M1350.5,849.7V891.9M1351.5,854.5V883.3M1352.5,855.7V883.9M1353.5,856.9V897.0M1354.5,847.2V909.0M1355.5,852.0V901.4M1356.5,836.8V913.3M1357.5,837.6V908.2M1358.5,834.2V890.2M1359.5,851.3V911.7M1360.5,852.4V893.5M1361.5,852.7V899.0M1362.5,848.7V907.5M1363.5,851.5V901.3M1364.5,849.9V893.6M1365.5,834.2V900.5M1366.5,850.2V884.4M1367.5,850.7V882.8M1368.5,838.9V898.4M1369.5,852.7V898.3M1370.5,851.2V883.2M1371.5,835.8V882.9M1372.5,836.4V881.0M1373.5,849.1V883.9M1374.5,851.1V892.3M1375.5,840.8V889.8M1376.5,856.4V886.1M1377.5,858.1V878.7M1378.5,851.8V883.8M1379.5,855.2V874.7M1380.5,858.6V878.1M1381.5,864.9V872.8M1382.5,863.0V875.2M1383.5,863.8V876.6M1384.5,864.3V880.0M1385.5,861.5V880.6M1386.5,862.0V878.4M1387.5,860.5V889.3M1388.5,858.3V887.0M1389.5,847.2V882.0M1390.5,850.3V884.7M1391.5,849.8V895.9M1392.5,844.0V897.8M1393.5,854.4V884.2M1394.5,858.7V890.4M1395.5,858.1V881.8M1396.5,853.5V880.8M1397.5,861.0V882.0M1398.5,862.1V875.9M1399.5,863.7V875.8M1400.5,861.5V873.7M1401.5,863.9V871.9M1402.5,862.4V875.2M1403.5,863.8V873.2M1404.5,861.3V875.0M1405.5,859.9V879.6M1406.5,852.1V876.4M1407.5,858.5V881.0M1408.5,854.6V887.2M1409.5,854.9V883.8M1410.5,839.3V894.4M1411.5,839.1V885.4M1412.5,853.6V883.1M1413.5,854.7V897.4M1414.5,854.2V884.6M1415.5,855.0V887.5M1416.5,855.2V899.3M1417.5,852.7V887.0M1418.5,854.5V884.7M1419.5,853.3V898.2M1420.5,845.2V901.6M1421.5,854.9V897.3M1422.5,854.1V898.6M1423.5,847.4V887.6M1424.5,855.6V898.3M1425.5,856.7V898.3M1426.5,858.0V895.4M1427.5,848.7V883.8M1428.5,857.0V882.3M1429.5,859.3V883.5M1430.5,849.4V893.8M1431.5,856.8V893.6M1432.5,860.6V881.1M1433.5,853.9V881.2M1434.5,861.5V888.5M1435.5,856.3V886.4M1436.5,855.4V882.0M1437.5,862.6V890.2M1438.5,861.2V888.0M1439.5,862.6V879.9M1440.5,853.7V891.9M1441.5,850.8V887.6M1442.5,843.1V891.2M1443.5,847.3V904.3M1444.5,844.2V891.8M1445.5,820.3V920.7M1446.5,818.2V922.6M1447.5,846.6V900.4M1448.5,818.8V891.1M1449.5,836.1V889.9M1450.5,849.1V890.4M1451.5,832.5V903.8M1452.5,841.7V904.4M1453.5,852.0V885.1M1454.5,851.8V885.1M1455.5,841.2V896.8M1456.5,855.6V882.5M1457.5,859.0V878.9M1458.5,861.1V876.9M1459.5,861.6V873.4M1460.5,863.5V871.7M1461.5,866.1V871.9M1462.5,867.3V870.7M1463.5,867.6V870.5M1464.5,866.8V870.6M1465.5,866.4V870.4M1466.5,867.5V870.9M1467.5,866.8V870.3M1468.5,867.8V870.3M1469.5,868.0V870.1M1470.5,866.5V871.5M1471.5,867.3V872.3M1472.5,864.6V872.5M1473.5,865.7V871.8M1474.5,862.3V872.8M1475.5,861.3V875.2M1476.5,860.8V877.2M1477.5,865.0V873.2M1478.5,864.2V878.0M1479.5,859.8V879.1M1480.5,859.5V878.5M1481.5,861.2V874.0M1482.5,865.3V872.8M1483.5,863.5V872.2M1484.5,865.8V872.6M1485.5,866.6V873.1M1486.5,866.3V870.9M1487.5,866.6V870.3M1488.5,867.2V870.8M1489.5,868.0V870.0M1683.5,865.2V872.8M1684.5,858.7V879.8M1685.5,861.4V877.2M1686.5,844.5V894.5M1687.5,849.8V890.9M1688.5,819.8V917.3M1689.5,811.3V915.4M1690.5,797.1V907.8M1691.5,771.3V944.2M1692.5,803.4V922.6M1693.5,836.6V914.3M1694.5,817.9V893.4M1695.5,831.1V900.9M1696.5,836.0V902.6M1697.5,853.2V903.6M1698.5,832.1V909.0M1699.5,835.8V888.9M1700.5,826.3V915.7M1701.5,839.9V913.4M1702.5,810.7V901.2M1703.5,832.4V898.6M1704.5,828.7V902.9M1705.5,826.2V925.4M1706.5,801.0V930.4M1707.5,835.2V921.7M1708.5,842.7V911.7M1709.5,830.4V894.9M1710.5,835.0V893.7M1711.5,845.3V880.6M1712.5,857.4V886.1M1713.5,855.2V882.0M1714.5,863.4V874.6M1715.5,863.8V871.6M1716.5,861.5V876.5M1717.5,859.3V876.9M1718.5,849.6V883.6M1719.5,835.8V901.5M1720.5,849.7V891.4M1721.5,833.7V888.6M1722.5,836.6V896.9M1723.5,815.0V917.1M1724.5,842.8V905.7M1725.5,825.9V907.7M1726.5,827.6V887.9M1727.5,845.2V887.2M1728.5,834.3V887.5M1729.5,852.7V892.7M1730.5,848.3V880.5M1731.5,856.1V884.4M1732.5,847.4V885.9M1733.5,842.3V881.6M1734.5,838.1V890.7M1735.5,843.8V885.5M1736.5,849.2V897.0M1737.5,828.9V886.6M1738.5,849.4V887.8M1739.5,828.8V894.2M1740.5,826.0V910.9M1741.5,839.4V891.8M1742.5,854.4V882.5M1743.5,849.9V883.2M1744.5,858.7V885.8M1745.5,863.0V876.0M1746.5,857.2V879.3M1747.5,861.0V877.9M1748.5,851.0V879.8M1749.5,854.8V888.7M1750.5,845.2V886.5M1751.5,845.4V904.0M1752.5,834.0V907.6M1753.5,833.0V916.8M1754.5,842.2V892.3M1755.5,838.6V901.7M1756.5,831.0V922.1M1757.5,808.2V930.2M1758.5,817.9V903.6M1759.5,834.7V925.7M1760.5,813.5V898.0M1761.5,827.7V898.0M1762.5,818.9V925.6M1763.5,829.0V897.3M1764.5,825.5V899.1M1765.5,836.1V892.9M1766.5,846.1V890.5M1767.5,849.6V919.0M1768.5,850.5V897.1M1769.5,837.7V902.5M1770.5,838.7V908.7M1771.5,854.7V885.9M1772.5,854.2V888.5M1773.5,858.0V893.1M1774.5,860.0V880.7M1775.5,861.4V882.3M1776.5,864.4V879.8M1777.5,862.2V876.6M1778.5,864.2V873.8M1779.5,866.3V873.6M1780.5,867.2V871.0M1781.5,867.0V872.2M1782.5,866.5V871.9M1783.5,867.5V870.2M1784.5,867.8V870.1M1785.5,865.8V872.2M1786.5,866.2V872.5M1787.5,862.1V872.9M1788.5,859.6V879.5M1789.5,855.8V882.5M1790.5,859.6V879.0M1791.5,859.1V879.2M1792.5,856.7V886.2M1793.5,846.7V892.9M1794.5,851.2V881.3M1795.5,848.8V889.0M1796.5,857.5V887.7M1797.5,857.4V891.8M1798.5,847.4V879.5M1799.5,853.6V889.3M1800.5,843.3V890.8M1801.5,853.8V879.8M1802.5,855.1V892.0M1803.5,848.7V881.6M1804.5,844.5V880.8M1805.5,850.0V878.1M1806.5,855.2V885.2M1807.5,852.8V886.0M1808.5,857.6V883.1M1809.5,857.5V884.4M1810.5,854.0V885.3M1811.5,852.4V879.9M1812.5,861.0V877.0M1813.5,859.7V877.6M1814.5,859.1V879.0M1815.5,853.2V884.8M1816.5,860.1V877.3M1817.5,860.8V883.9M1818.5,860.8V882.1M1819.5,856.0V882.9M1820.5,855.0V880.0M1821.5,861.4V878.9M1822.5,855.8V876.3M1823.5,856.2V881.6M1824.5,857.7V876.5M1825.5,858.8V883.8M1826.5,860.7V877.4M1827.5,858.7V878.9M1828.5,848.6V887.4M1829.5,851.2V880.9M1830.5,844.7V884.2M1831.5,858.2V879.3M1832.5,844.5V879.9M1833.5,856.6V879.7M1834.5,853.8V881.8M1835.5,844.6V891.5M1836.5,857.4V878.8M1837.5,849.6V882.7M1838.5,859.7V877.6M1839.5,862.1V879.6M1840.5,862.9V873.6M1841.5,866.5V871.8M1842.5,866.0V872.0M1843.5,867.3V871.8M1844.5,867.7V870.7M1845.5,867.6V870.3M1846.5,866.7V871.1M1847.5,867.8V870.3M1848.5,867.6V870.1M1849.5,867.0V871.2M1850.5,868.0V870.3M1851.5,867.8V870.3M1852.5,865.3V872.3M1853.5,862.2V872.3M1854.5,861.2V874.0M1855.5,855.3V880.0M1856.5,859.2V877.4M1857.5,856.7V878.7M1858.5,844.5V886.9M1859.5,843.2V878.8M1860.5,850.8V890.7M1861.5,848.1V882.8M1862.5,841.8V899.8M1863.5,816.4V902.7M1864.5,838.8V904.2M1865.5,838.8V896.1M1866.5,810.3V913.1M1867.5,839.3V901.2M1868.5,841.7V891.7M1869.5,850.2V887.6M1870.5,853.5V901.0M1871.5,855.4V890.1M1872.5,850.0V881.5M1873.5,854.3V887.3M1874.5,861.2V884.5M1875.5,861.5V875.5M1876.5,865.7V877.3M1877.5,867.0V871.9M1878.5,865.3V872.6M1879.5,866.2V873.6M1880.5,862.4V872.6M1881.5,864.9V873.5M1882.5,859.0V878.0M1883.5,857.2V873.9M1884.5,859.1V880.0M1885.5,856.5V880.5M1886.5,859.4V877.5M1887.5,864.2V879.6M1888.5,864.1V875.7M1889.5,860.5V876.9M1890.5,863.0V873.2M1891.5,864.9V874.4M1892.5,864.8V871.4M1893.5,865.3V871.0M1894.5,865.7V872.1M1895.5,864.7V873.3M1896.5,864.8V875.1M1897.5,863.2V873.3M1898.5,861.8V878.9M1899.5,861.0V883.6M1900.5,853.0V885.0M1901.5,851.8V876.4M1902.5,859.0V885.1M1903.5,856.3V885.5M1904.5,853.4V881.7M1905.5,859.9V878.3M1906.5,854.2V885.9M1907.5,859.6V878.8M1908.5,859.1V882.9M1909.5,861.6V878.6" stroke="#a6ff2e" stroke-width="1"/><path d="M472.5,974V984M546.5,979V984M621.5,974V984M696.5,979V984M771.5,974V984M846.5,979V984M921.5,974V984M996.5,979V984M1071.5,974V984M1146.5,979V984M1221.5,974V984M1296.5,979V984M1371.5,974V984M1446.5,979V984M1521.5,974V984M1596.5,979V984M1671.5,974V984M1746.5,979V984M1821.5,974V984M1896.5,979V984" stroke="#9a9a9a" stroke-width="1"/></svg>
<div class="t" style="left:474px;top:974px;font-size:10px;line-height:10px;color:#a0a0a0;">0</div>
<div class="t" style="left:624px;top:974px;font-size:10px;line-height:10px;color:#a0a0a0;">1</div>
<div class="t" style="left:774px;top:974px;font-size:10px;line-height:10px;color:#a0a0a0;">2</div>
<div class="t" style="left:924px;top:974px;font-size:10px;line-height:10px;color:#a0a0a0;">3</div>
<div class="t" style="left:1074px;top:974px;font-size:10px;line-height:10px;color:#a0a0a0;">4</div>
<div class="t" style="left:1224px;top:974px;font-size:10px;line-height:10px;color:#a0a0a0;">5</div>
<div class="t" style="left:1374px;top:974px;font-size:10px;line-height:10px;color:#a0a0a0;">6</div>
<div class="t" style="left:1524px;top:974px;font-size:10px;line-height:10px;color:#a0a0a0;">7</div>
<div class="t" style="left:1674px;top:974px;font-size:10px;line-height:10px;color:#a0a0a0;">8</div>
<div class="t" style="left:1824px;top:974px;font-size:10px;line-height:10px;color:#a0a0a0;">9</div>
<div class="a" style="left:0px;top:1028px;width:1920px;height:1px;background:#dcdcdc"></div>
<div class="t" style="left:1812px;top:1034px;font-size:12px;line-height:12px;color:#000;">0 lines selected/0</div>
<div class="a" style="left:0px;top:1050px;width:1920px;height:30px;background:linear-gradient(90deg,#263a42 0%,#22343e 45%,#202d3e 75%,#1c2541 100%)"></div>
<div class="a" style="left:39px;top:1050px;width:36px;height:30px;background:#475866"></div>
<div class="a" style="left:39px;top:1078px;width:36px;height:2px;background:#76b9ed"></div>
<svg class="a" style="left:9px;top:1056px" width="18" height="18"><path d="M0.5,2.7 L7.6,1.7 V8.4 H0.5 Z M8.6,1.5 L17.5,0.3 V8.4 H8.6 Z M0.5,9.4 H7.6 V16.2 L0.5,15.2 Z M8.6,9.4 H17.5 V17.6 L8.6,16.4 Z" fill="#fff"/></svg>
<svg class="a" style="left:49px;top:1056px" width="17" height="17" viewBox="0 0 17 17">
<rect x="0.5" y="0.5" width="16" height="16" rx="2" fill="#c8102e"/>
<path d="M9.5,4.3 H5 Q3.2,4.3 3.2,6.1 Q3.2,7.9 5,7.9 H6.6 Q8.4,7.9 8.4,9.9 Q8.4,12 6.4,12 H3" stroke="#fff" stroke-width="2" fill="none"/>
<path d="M9.5,4.3 H14.2 M10.5,8 H14.2 M9.5,12 H14.2" stroke="#fff" stroke-width="1.8"/>
</svg>
<div class="t" style="left:1888px;top:1059px;font-size:12px;line-height:12px;color:#f4f4f4;letter-spacing:-0.4px">14:06</div>
</body></html>
